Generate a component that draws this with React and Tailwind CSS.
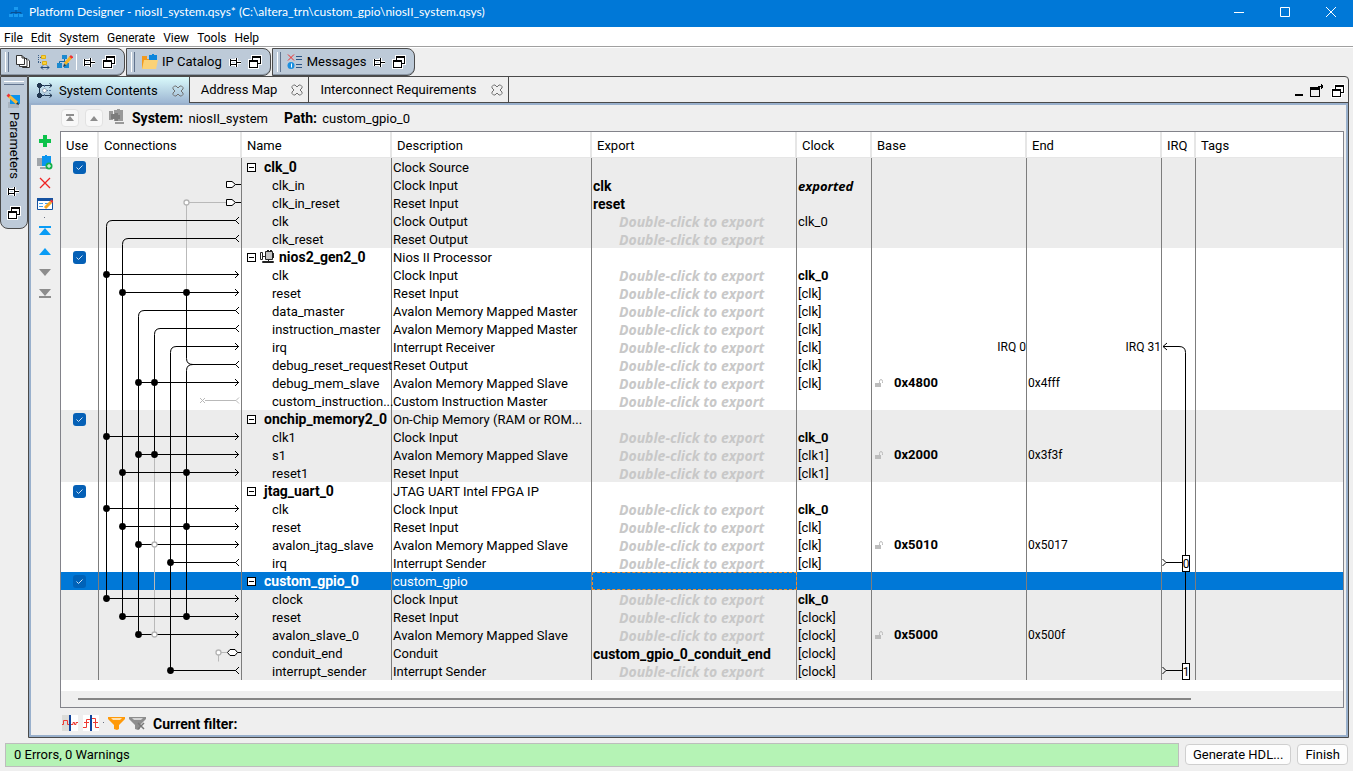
import { useState } from "react";

const DBL = "Double-click to export";

const GROUPS = [
  {
    name: "clk_0", desc: "Clock Source", shade: true,
    rows: [
      { name: "clk_in", desc: "Clock Input", exp: "clk", clock: "exported", style: "italic" },
      { name: "clk_in_reset", desc: "Reset Input", exp: "reset" },
      { name: "clk", desc: "Clock Output", clock: "clk_0" },
      { name: "clk_reset", desc: "Reset Output" },
    ],
  },
  {
    name: "nios2_gen2_0", desc: "Nios II Processor", cpu: true,
    rows: [
      { name: "clk", desc: "Clock Input", clock: "clk_0", style: "bold" },
      { name: "reset", desc: "Reset Input", clock: "[clk]" },
      { name: "data_master", desc: "Avalon Memory Mapped Master", clock: "[clk]" },
      { name: "instruction_master", desc: "Avalon Memory Mapped Master", clock: "[clk]" },
      { name: "irq", desc: "Interrupt Receiver", clock: "[clk]", irqBase: "IRQ 0", irqEnd: "IRQ 31" },
      { name: "debug_reset_request", desc: "Reset Output", clock: "[clk]" },
      { name: "debug_mem_slave", desc: "Avalon Memory Mapped Slave", clock: "[clk]", base: "0x4800", end: "0x4fff" },
      { name: "custom_instruction...", desc: "Custom Instruction Master" },
    ],
  },
  {
    name: "onchip_memory2_0", desc: "On-Chip Memory (RAM or ROM...", shade: true,
    rows: [
      { name: "clk1", desc: "Clock Input", clock: "clk_0", style: "bold" },
      { name: "s1", desc: "Avalon Memory Mapped Slave", clock: "[clk1]", base: "0x2000", end: "0x3f3f" },
      { name: "reset1", desc: "Reset Input", clock: "[clk1]" },
    ],
  },
  {
    name: "jtag_uart_0", desc: "JTAG UART Intel FPGA IP",
    rows: [
      { name: "clk", desc: "Clock Input", clock: "clk_0", style: "bold" },
      { name: "reset", desc: "Reset Input", clock: "[clk]" },
      { name: "avalon_jtag_slave", desc: "Avalon Memory Mapped Slave", clock: "[clk]", base: "0x5010", end: "0x5017" },
      { name: "irq", desc: "Interrupt Sender", clock: "[clk]" },
    ],
  },
  {
    name: "custom_gpio_0", desc: "custom_gpio", shade: true, selected: true,
    rows: [
      { name: "clock", desc: "Clock Input", clock: "clk_0", style: "bold" },
      { name: "reset", desc: "Reset Input", clock: "[clock]" },
      { name: "avalon_slave_0", desc: "Avalon Memory Mapped Slave", clock: "[clock]", base: "0x5000", end: "0x500f" },
      { name: "conduit_end", desc: "Conduit", exp: "custom_gpio_0_conduit_end", clock: "[clock]" },
      { name: "interrupt_sender", desc: "Interrupt Sender", clock: "[clock]" },
    ],
  },
];

// vertical centre of a table row inside the wiring drawings
const y = (row) => row * 18 + 8.5;

const ARROWS = [[6, 7.5], [7, 23.5], [10, 77], [12, 39.5], [15, 7.5], [16, 39.5], [17, 23.5], [19, 7.5], [20, 23.5], [21, 39.5], [24, 7.5], [25, 23.5], [26, 39.5]];
const FORKS = [[3, 13], [4, 29], [8, 45], [9, 61], [11, 94], [22, 71.5], [28, 71.5]];
const DOTS = [[6, 7], [15, 7], [19, 7], [24, 7], [7, 23], [17, 23], [20, 23], [25, 23], [12, 39], [16, 39], [21, 39], [26, 39], [12, 55], [16, 55], [22, 71], [28, 71], [7, 87], [17, 87], [20, 87], [25, 87]];
const BUSES = [[7.5, 3, 24], [23.5, 4, 25], [39.5, 8, 26], [55.5, 9, 16], [71.5, 10, 28]];

function Hollow({ x, row }) {
  return <circle cx={x} cy={y(row)} r="2.5" fill="#fff" stroke="#b4b4b4" strokeWidth="1.3" />;
}

function Wiring() {
  return (
    <svg width="142" height="522" viewBox="0 0 142 522" fill="none" stroke="#000" className="block">
      <g stroke="#b9b9b9">
        <path d={`M87.5 ${y(2)}V${y(7)} M90 ${y(2)}H127`} />
        <path d={`M55.5 ${y(16)}V${y(26)}`} />
        <path d={`M106 ${y(13)}H137 M140 ${y(13) - 3}L137 ${y(13)}L140 ${y(13) + 3} M101 ${y(13) - 2.5}l5 5 M106 ${y(13) - 2.5}l-5 5`} />
        <path d={`M119.5 ${y(27)}V${y(28) - 9} M121 ${y(27)}H128`} />
      </g>
      {BUSES.map(([x, a, b]) => (
        <path key={x} d={`M${x} ${y(b)}V${y(a) + 6}Q${x} ${y(a)} ${x + 6} ${y(a)}`} />
      ))}
      <path d={`M87.5 ${y(7)}V${y(11) - 6}Q87.5 ${y(11)} 94 ${y(11)}`} />
      <path d={`M87.5 ${y(25)}V${y(11) + 6}Q87.5 ${y(11)} 94 ${y(11)}`} />
      {ARROWS.map(([r, x]) => (
        <path key={r} d={`M${x} ${y(r)}H140 M136 ${y(r) - 3.5}L139.5 ${y(r)}L136 ${y(r) + 3.5}`} />
      ))}
      {FORKS.map(([r, x]) => (
        <path key={r} d={`M${x} ${y(r)}H137 M140 ${y(r) - 3.5}L136.5 ${y(r)}L140 ${y(r) + 3.5}`} />
      ))}
      {[1, 2].map((r) => (
        <path key={r} fill="#fff" d={`M127.5 ${y(r) - 3}H133L136.5 ${y(r)}L133 ${y(r) + 3}H127.5Z M136.5 ${y(r)}H142`} />
      ))}
      <path fill="#fff" d={`M128.5 ${y(27)}L131 ${y(27) - 3}H136L138.5 ${y(27)}L136 ${y(27) + 3}H131Z M138.5 ${y(27)}H142`} />
      {DOTS.map(([r, x]) => (
        <circle key={`${r}-${x}`} cx={x + 0.5} cy={y(r)} r="3.4" fill="#000" stroke="none" />
      ))}
      <Hollow x={87.5} row={2} />
      <Hollow x={55.5} row={21} />
      <Hollow x={55.5} row={26} />
      <Hollow x={119.5} row={27} />
    </svg>
  );
}

function IrqWiring() {
  return (
    <svg width="34" height="524" viewBox="0 0 34 524" fill="none" stroke="#000" className="block">
      <path d={`M1 ${y(10)}H17Q23.5 ${y(10)} 23.5 ${y(10) + 6}V${y(28)}`} />
      <path d={`M5 ${y(10) - 3.5}L1 ${y(10)}L5 ${y(10) + 3.5}`} />
      {[22, 28].map((r, i) => (
        <g key={r}>
          <path d={`M0.5 ${y(r) - 3.5}L4 ${y(r)}L0.5 ${y(r) + 3.5} M4 ${y(r)}H20`} />
          <rect x="20.5" y={y(r) - 7} width="7" height="16" fill="#fff" />
          <text x="24" y={y(r) + 5} textAnchor="middle" fontSize="12" fill="#000" stroke="none">{i}</text>
        </g>
      ))}
    </svg>
  );
}

function Svg({ w = 16, h = 16, children, ...rest }) {
  return (
    <svg width={w} height={h} viewBox={`0 0 ${w} ${h}`} fill="none" className="block shrink-0" {...rest}>
      {children}
    </svg>
  );
}

const PinIcon = () => (
  <Svg w={13} h={13} stroke="#fff" strokeWidth="3" shapeRendering="crispEdges">
    <path d="M1.5 3V10 M1 4.5H7 M1 8.5H7 M7.5 2V11 M8 6.5H12" />
    <path fill="#bdcad8" stroke="#000" strokeWidth="1" d="M1.5 3V10 M1 4.5H7 M1 8.5H7 M7.5 2V11 M8 6.5H12" />
    <path stroke="#fff" strokeWidth="1" d="M2 5.5H7 M2 7.5H7" />
  </Svg>
);

const RestoreIcon = () => (
  <Svg w={14} h={14} shapeRendering="crispEdges">
    <path fill="#fff" d="M3 0H14V10H11V14H0V4H3Z" />
    <path fill="#000" d="M4 1H13V9H10V8H12V3H5V5H4Z" />
    <path fill="#000" fillRule="evenodd" d="M1 5H10V13H1Z M2 7V12H9V7Z" />
  </Svg>
);

const CopyIcon = () => (
  <Svg strokeWidth="1" stroke="#333">
    <path fill="#fff" d="M7.5 4.5H12L14.5 7V13.5H7.5Z" />
    <path fill="#fff" d="M4.5 3.5H9.5L12 6V12.5H4.5Z" />
    <path fill="#fff" d="M1.5 1.5H7L9.5 4V10.5H1.5Z" />
    <path d="M7 1.5V4H9.5" />
  </Svg>
);

const HierIcon = () => (
  <Svg>
    <path fill="#f7d23c" stroke="#e0ad10" d="M5.5 1.5h4v3h-4z M6.5 7.5h4v3h-4z" />
    <path stroke="#3b5f86" strokeDasharray="1 1" d="M2.5 1V9 M2 3.5H5 M2 8.5H6" />
    <path stroke="#234a78" d="M5 13.5H13 M7 11.5L5 13.5L7 15.5 M11 11.5L13 13.5L11 15.5" />
  </Svg>
);

const EditHierIcon = () => (
  <Svg>
    <path fill="#1b8ad0" d="M5 1h5v4H5z M0 9h5v5H0z M7 9h5v5H7z" />
    <path stroke="#1468a8" d="M7.5 5V7.5 M2.5 9V7.5H9.5V9" />
    <path stroke="#f6b420" strokeWidth="3" d="M14 3L8 10" />
    <path stroke="#e33" strokeWidth="3" d="M15 2L13.5 3.8" />
    <path fill="#333" d="M6 13l1-3 2 1.5z" />
  </Svg>
);

const FolderIcon = () => (
  <Svg w={17}>
    <path fill="#f29a1d" d="M1 2h5v3h8v10H1z" />
    <path fill="#0d86dc" d="M8 1h3V0h2v1h3v6H8z" />
    <path fill="#fbd277" d="M3 6h14l-2 9H1z" />
  </Svg>
);

const MessageIcon = () => (
  <Svg>
    <path stroke="#ee2a2a" d="M1 0.5L7 6.5 M7 0.5L1 6.5" />
    <circle cx="4" cy="11.5" r="3.5" fill="#1a8fe0" />
    <path stroke="#fff" d="M4.5 9.5V13.5" />
    <path stroke="#2c5687" d="M9 2.5h6 M9 5.5h6 M9 10.5h6 M9 13.5h6" />
  </Svg>
);

const ContentsIcon = () => (
  <Svg w={17}>
    <path stroke="#20364f" d="M3 2.5H16 M3.5 2V13 M3 12.5H16 M13.5 0.5L16 2.5L13.5 4.5 M13.5 10.5L16 12.5L13.5 14.5" />
    <path stroke="#54739b" strokeDasharray="2 1" d="M8.5 2V13 M10 7.5H16" />
    <path fill="#20364f" d="M1 1h1V0h3v1h1v3H5v1H2V4H1z M1 11h1v-1h3v1h1v3H5v1H2v-1H1z" />
    <circle cx="8.5" cy="7.5" r="2" fill="#fff" stroke="#9ab" />
  </Svg>
);

const ParamIcon = () => (
  <Svg>
    <path fill="#a8b3bf" d="M2 9h11v6H2z" />
    <path fill="#0a94ee" d="M4 2h10v9H4z" />
    <path stroke="#f7b733" strokeWidth="3" d="M3 3L11 10" />
    <path stroke="#e33" strokeWidth="3" d="M1.5 1.7L3.5 3.4" />
    <path fill="#333" d="M13 12l-3-1 2-2z" />
  </Svg>
);

const CloseTab = ({ label }) => (
  <button type="button" aria-label={`Close ${label}`}>
    <Svg w={12} h={12} stroke="#707070" strokeLinejoin="round">
      <path d="M2.5 1H4L6 3L8 1H9.5L11 2.5V4L9 6L11 8V9.5L9.5 11H8L6 9L4 11H2.5L1 9.5V8L3 6L1 4V2.5Z" />
    </Svg>
  </button>
);

const AddIcon = () => <Svg><path fill="#0cc24b" d="M6 2h4v4h4v4h-4v4H6v-4H2V6h4z" /></Svg>;
const AddIpIcon = () => (
  <Svg>
    <path fill="#a0a5aa" d="M0 4h5v8H0z M3 13h7v2H3z" />
    <path fill="#0a94ee" d="M5 2h3V1h2v1h4v10H5z" />
    <circle cx="12" cy="12" r="3.5" fill="#15b04a" />
    <path stroke="#fff" d="M10 12h4 M12 10v4" />
  </Svg>
);
const DeleteIcon = () => <Svg><path stroke="#ee2222" strokeWidth="1.3" d="M3 3L13 13 M13 3L3 13" /></Svg>;
const EditIcon = () => (
  <Svg>
    <path fill="#fff" stroke="#1552a0" d="M0.5 2.5h15v11h-15z" />
    <path fill="#1552a0" d="M0 2h16v3H0z" />
    <path stroke="#42a0e8" d="M2 7.5h4 M2 10.5h4 M8 7.5h5" />
    <path stroke="#f5a623" strokeWidth="3" d="M14 6L8 12" />
    <path stroke="#e33" strokeWidth="3" d="M15.5 4.5L14 6" />
  </Svg>
);
const TopIcon = ({ color }) => <Svg><path fill={color} d="M2 3h12v2H2z M8 5L14 12H2z" /></Svg>;
const UpIcon = ({ color }) => <Svg><path fill={color} d="M8 4L14 11H2z" /></Svg>;
const DownIcon = () => <Svg><path fill="#8d8d8d" d="M2 4h12L8 11z" /></Svg>;
const BottomIcon = () => <Svg><path fill="#8d8d8d" d="M2 3h12L8 10z M2 10h12v2H2z" /></Svg>;

const CpuIcon = () => (
  <Svg w={15} h={14}>
    <path fill="#c4c4c4" stroke="#222" d="M5.5 1.5h7v8h-7z" />
    <path fill="#fff" stroke="#222" d="M0.5 2.5h2v7h-2z M2.5 11.5h11v1h-11z" />
    <path stroke="#222" d="M7 0.5h2 M10 0.5h2 M13.5 3v5 M3 6.5h2 M8.5 9v2" />
  </Svg>
);

const LockIcon = () => (
  <Svg w={9} h={9}>
    <path fill="#bdbdbd" d="M0 4h6v4H0z" />
    <path stroke="#bdbdbd" d="M4.5 4V2.5Q4.5 0.5 6 0.5T7.5 2.5V4" />
  </Svg>
);

function Grip() {
  return <span className="mr-[6px] h-5 w-1 shrink-0 border-x border-white border-r-slate-500" />;
}

function Dock({ children }) {
  return (
    <div className="flex h-7 items-center rounded-r-lg border border-[#4a4a4a] bg-[#bdcad8] pl-1 pr-2 shadow-[inset_0_-1px_0_#8c98a6]">
      <Grip />
      {children}
    </div>
  );
}

function DockButtons({ label }) {
  return (
    <div className="flex items-center gap-[6px]">
      <button type="button" aria-label={`Pin ${label}`}><PinIcon /></button>
      <button type="button" aria-label={`Restore ${label}`}><RestoreIcon /></button>
    </div>
  );
}

function Tab({ label, active, children }) {
  return (
    <div className={"flex items-center border-r border-[#4a4a4a] pr-[5px] " + (active ? "h-7 bg-linear-to-b from-[#dafafb] to-[#99b1cf] pl-[7px]" : "h-[26px] border-b bg-[#efefef] pl-[5px]")}>
      {children}
      <button type="button" role="tab" aria-selected={!!active} className="mr-[14px] whitespace-nowrap pl-[6px]">{label}</button>
      <CloseTab label={label} />
    </div>
  );
}

const cellBox = "h-[18px] border-r border-[#7d7d7d] p-0 pl-px whitespace-nowrap";
const cell = "h-[18px] border-r border-[#7d7d7d] p-0 pt-[2px] pl-px whitespace-nowrap";

const clockStyles = {
  bold: "font-bold",
  italic: "font-['Open_Sans',sans-serif] font-bold italic",
};

function UseBox({ label, selected }) {
  const [on, setOn] = useState(true);
  return (
    <label className="relative ml-[11px] block size-[13px]">
      <input
        type="checkbox"
        aria-label={`Use ${label}`}
        checked={on}
        onChange={() => setOn(!on)}
        className={"block size-[13px] appearance-none rounded-[3px] " + (selected ? "bg-[#0062b8]" : "bg-[#0560b6]")}
      />
      {on && (
        <svg viewBox="0 0 13 13" className="pointer-events-none absolute inset-0" fill="none" stroke="#cfe3f5">
          <path d="M3.5 6.5L5.5 8.5L9.5 4.5" />
        </svg>
      )}
    </label>
  );
}

function GroupRows({ group }) {
  const bg = group.shade ? "bg-[#ececec]" : "bg-white";
  return (
    <tbody className={bg}>
      <tr className={group.selected ? "bg-[#0078d7] text-white" : ""}>
        <td className={cellBox}><UseBox label={group.name} selected={group.selected} /></td>
        <td className={cellBox}></td>
        <td className={cellBox}>
          <div className="flex h-[18px] items-center gap-1 pl-1">
            <button type="button" aria-label={`Collapse ${group.name}`}>
              <Svg w={9} h={9} stroke="#000" shapeRendering="crispEdges">
                <path fill="#fff" d="M0.5 0.5h8v8h-8z M2 4.5h5" />
              </Svg>
            </button>
            {group.cpu && <CpuIcon />}
            <span className={"text-sm leading-4 font-bold" + (group.cpu ? "" : " pl-1")}>{group.name}</span>
          </div>
        </td>
        <td className={cell}>{group.desc}</td>
        <td className={cell + (group.selected ? " outline-1 -outline-offset-1 outline-dashed outline-[#f08c28]" : "")}></td>
        <td className={cell}></td>
        <td className={cell}></td>
        <td className={cell}></td>
        <td className={cell}></td>
        <td className="p-0"></td>
      </tr>
      {group.rows.map((r, i) => (
        <tr key={i}>
          <td className={cell}></td>
          <td className={cell}></td>
          <td className={cell}><div className="pl-[29px]">{r.name}</div></td>
          <td className={cell}>{r.desc}</td>
          <td className={cell}>
            {r.exp
              ? <b className="block text-sm leading-4 font-bold">{r.exp}</b>
              : <div className="pl-[26px] font-['Open_Sans',sans-serif] text-sm leading-4 font-bold text-[#c8c8c8] italic">{DBL}</div>}
          </td>
          <td className={cell}>
            <div className={r.style ? clockStyles[r.style] : ""}>{r.clock}</div>
          </td>
          <td className={cellBox}>
            {r.irqBase && <div className="text-right text-xs">{r.irqBase}</div>}
            {r.base && (
              <div className="flex items-center pl-[2px]">
                <LockIcon />
                <b className="pl-[10px] font-bold">{r.base}</b>
              </div>
            )}
          </td>
          <td className={cellBox}>
            {r.irqEnd && <div className="text-right text-xs">{r.irqEnd}</div>}
            {r.end && <div className="text-xs">{r.end}</div>}
          </td>
          <td className={cell}></td>
          <td className="p-0"></td>
        </tr>
      ))}
    </tbody>
  );
}

const HEADS = ["Use", "Connections", "Name", "Description", "Export", "Clock", "Base", "End", "IRQ", "Tags"];

function SystemTable() {
  return (
    <div className="relative">
      <table className="w-full table-fixed border-separate border-spacing-0 text-[13px] leading-4">
        <colgroup>
          <col className="w-[38px]" />
          <col className="w-[143px]" />
          <col className="w-[150px]" />
          <col className="w-[200px]" />
          <col className="w-[205px]" />
          <col className="w-[75px]" />
          <col className="w-[155px]" />
          <col className="w-[135px]" />
          <col className="w-[34px]" />
          <col />
        </colgroup>
        <thead>
          <tr>
            {HEADS.map((h) => (
              <th key={h} className="h-[26px] border-r-2 border-b border-[#e6e6e6] bg-white p-0 pt-[2px] pl-[5px] text-left font-normal last:border-r-0">{h}</th>
            ))}
          </tr>
        </thead>
        {GROUPS.map((g) => <GroupRows key={g.name} group={g} />)}
      </table>
      <div className="pointer-events-none absolute top-[26px] left-[38px]"><Wiring /></div>
      <div className="pointer-events-none absolute top-[26px] left-[1101px]"><IrqWiring /></div>
    </div>
  );
}

function SideTools() {
  const tools = [
    ["Add", <AddIcon />], ["Add IP", <AddIpIcon />], ["Remove", <DeleteIcon />], ["Edit", <EditIcon />],
  ];
  const moves = [
    ["Move to top", <TopIcon color="#0a9cf5" />], ["Move up", <UpIcon color="#0a9cf5" />], ["Move down", <DownIcon />], ["Move to bottom", <BottomIcon />],
  ];
  return (
    <div className="flex w-[29px] shrink-0 flex-col items-center gap-[5px] pt-[2px] pr-[2px]">
      {tools.map(([l, icon]) => <button key={l} type="button" aria-label={l}>{icon}</button>)}
      <span className="h-px w-px bg-gray-500" />
      {moves.map(([l, icon]) => <button key={l} type="button" aria-label={l}>{icon}</button>)}
    </div>
  );
}

export default function App() {
  return (
    <div className="flex min-h-screen flex-col bg-[#efefef] font-['Roboto','Liberation_Sans',sans-serif] text-[13px] leading-4 text-black">
      <header className="flex h-[27px] items-center bg-[#0078d7] pb-[3px] pl-2 text-xs text-white">
        <Svg>
          <path fill="#1a9af0" d="M6 3h4v3H6z M1 10h4v3H1z M6 10h4v3H6z M11 10h4v3h-4z" />
          <path stroke="#0b4f91" d="M8 6v4 M3 10V8.5h10V10" />
        </Svg>
        <h1 className="flex-1 pl-[5px] font-['Lato',sans-serif]">Platform Designer - niosII_system.qsys* (C:\altera_trn\custom_gpio\niosII_system.qsys)</h1>
        <div className="flex gap-9 pr-[17px]">
          <button type="button" aria-label="Minimize"><Svg w={10} h={10} stroke="#fff"><path d="M0 5.5h10" /></Svg></button>
          <button type="button" aria-label="Maximize"><Svg w={10} h={10} stroke="#fff"><path d="M0.5 0.5h9v9h-9z" /></Svg></button>
          <button type="button" aria-label="Close"><Svg w={10} h={10} stroke="#fff"><path d="M0 0L10 10 M10 0L0 10" /></Svg></button>
        </div>
      </header>

      <nav className="flex h-5 items-center gap-2 border-b border-[#a0a0a0] bg-white pt-[2px] pl-1 text-xs">
        {["File", "Edit", "System", "Generate", "View", "Tools", "Help"].map((m) => (
          <button key={m} type="button">{m}</button>
        ))}
      </nav>

      <div className="flex gap-px border-t border-white">
        <Dock>
          <div className="mr-[6px] flex items-center gap-[5px] border-r border-white pr-[3px]">
            <button type="button" aria-label="Copy"><CopyIcon /></button>
            <button type="button" aria-label="Hierarchy"><HierIcon /></button>
            <button type="button" aria-label="Edit hierarchy"><EditHierIcon /></button>
          </div>
          <DockButtons label="toolbar" />
        </Dock>
        <Dock>
          <FolderIcon />
          <span className="pr-[7px] pl-1">IP Catalog</span>
          <DockButtons label="IP Catalog" />
        </Dock>
        <Dock>
          <MessageIcon />
          <span className="pr-[7px] pl-1">Messages</span>
          <DockButtons label="Messages" />
        </Dock>
      </div>

      <div className="flex flex-1 pr-1">
        <aside className="flex h-[153px] w-7 shrink-0 flex-col items-center rounded-b-lg border border-[#4a4a4a] bg-[#bdcad8] pt-1">
          <span className="mb-2 h-1 w-5 border-y border-white border-b-slate-500" />
          <ParamIcon />
          <span className="flex-1 pt-[3px] [writing-mode:vertical-rl]">Parameters</span>
          <div className="flex flex-col gap-2 pb-2">
            <button type="button" aria-label="Pin Parameters"><PinIcon /></button>
            <button type="button" aria-label="Restore Parameters"><RestoreIcon /></button>
          </div>
        </aside>

        <main className="flex min-w-0 flex-1 flex-col rounded-tr border border-[#4a4a4a]">
          <div className="flex h-[26px] shrink-0 border-b border-[#4a4a4a]">
            <div role="tablist" className="flex items-start">
              <Tab label="System Contents" active><ContentsIcon /></Tab>
              <Tab label="Address Map" />
              <Tab label="Interconnect Requirements" />
            </div>
            <div className="ml-auto flex items-center gap-[6px] pt-[2px] pr-[3px]">
              <button type="button" aria-label="Minimize panel"><Svg w={9} h={12}><path fill="#000" d="M0 9h8v2H0z" /></Svg></button>
              <button type="button" aria-label="Detach panel">
                <Svg w={15} h={13} shapeRendering="crispEdges">
                  <path fill="#000" fillRule="evenodd" d="M0 3h10v10H0z M1 6v6h8V6z" />
                  <path stroke="#000" d="M8.5 5V2.5H13 M11.5 0v5 M12.5 1v3" />
                </Svg>
              </button>
              <button type="button" aria-label="Restore panel"><RestoreIcon /></button>
            </div>
          </div>

          <div className="flex flex-1 flex-col border-2 border-[#99b0cc] pr-[2px]">
            <div className="flex h-[26px] shrink-0 items-center pl-[30px]">
              <div className="flex gap-[6px]">
                <button type="button" aria-label="Go to top" className="rounded border border-[#e2e2e2] bg-[#f8f8f8]"><Svg><path fill="#8d8d8d" d="M4 4h8v2H4z M8 6l4 5H4z" /></Svg></button>
                <button type="button" aria-label="Go up" className="rounded border border-[#e2e2e2] bg-[#f8f8f8]"><Svg><path fill="#8d8d8d" d="M8 6l4 5H4z" /></Svg></button>
                <Svg><path fill="#999" d="M0 2h4v9H0z M5 1h3V0h3v1h3v11H5z M6 13h9v2H6z" /><path fill="#7c7c7c" d="M2 5h4v-1h3v2h2v4h-2v2H6v-2H2z" /></Svg>
              </div>
              <p className="pl-[7px]"><b className="pr-[2px] text-sm leading-4">System:</b> niosII_system</p>
              <p className="pl-4"><b className="pr-[2px] text-sm leading-4">Path:</b> custom_gpio_0</p>
            </div>

            <div className="flex flex-1">
              <SideTools />
              <section className="flex min-w-0 flex-1 flex-col border border-[#82838a] bg-white">
                <SystemTable />
                <div className="flex-1" />
                <div className="flex h-4 items-center bg-[#efefef] pl-[17px]">
                  <div className="h-[2px] w-[88%] bg-[#858585]" />
                </div>
              </section>
            </div>

            <div className="flex h-[27px] shrink-0 items-center pt-[2px] pl-[31px]">
              <button type="button" aria-label="Clock domain" className="mr-[5px]">
                <Svg><path fill="#dcdcd8" d="M0 0h7v16H0z" /><path fill="#fff" d="M9 0h7v16H9z" /><path stroke="#ee3a32" d="M0 9.5h1.5V5.5h4v4H7 M9 9.5h2V7.5h1.5v2H14v-2h2" /><path stroke="#11449c" strokeWidth="2" d="M8 0v16" /></Svg>
              </button>
              <button type="button" aria-label="Reset domain">
                <Svg><path fill="#fff" d="M0 0h16v16H0z" /><path stroke="#ee3a32" d="M0 12.5H3.5V4.5H7 M1 7.5h5 M9 3.5h3.5v9H16 M10 7.5h5" /><path stroke="#11449c" strokeWidth="2" d="M8 0v16" /></Svg>
              </button>
              <span className="mx-1 h-px w-px bg-gray-500" />
              <button type="button" aria-label="Filter" className="mr-1">
                <Svg w={17}><path fill="#ff9a0a" d="M0 2h17v2l-6 6v4l-2 1-3-1v-4L0 4z" /><path fill="#ffe1ae" d="M3 3h11l-2 2H5z" /></Svg>
              </button>
              <button type="button" aria-label="Clear filter">
                <Svg w={17}><path fill="#8d8d8d" d="M0 2h17v2l-6 6v4l-2 1-3-1v-4L0 4z" /><path fill="#d4d4d4" d="M3 3h11l-2 2H5z" /><path stroke="#777" strokeWidth="1.5" d="M9 8l6 6 M15 8l-6 6" /></Svg>
              </button>
              <b className="pt-[3px] pl-[7px] text-sm leading-4">Current filter:</b>
            </div>
          </div>
        </main>
      </div>

      <footer className="flex h-[33px] shrink-0 items-center gap-[6px] pr-[5px] pl-[5px]">
        <div role="status" className="flex h-6 flex-1 items-center border border-[#bdbdbd] bg-[#b5f3b5] pl-2">0 Errors, 0 Warnings</div>
        <button type="button" className="h-[21px] rounded border border-[#cfcfcf] bg-[#fdfdfd] px-[7px]">Generate HDL...</button>
        <button type="button" className="h-[21px] rounded border border-[#cfcfcf] bg-[#fdfdfd] px-[7px]">Finish</button>
      </footer>
    </div>
  );
}
